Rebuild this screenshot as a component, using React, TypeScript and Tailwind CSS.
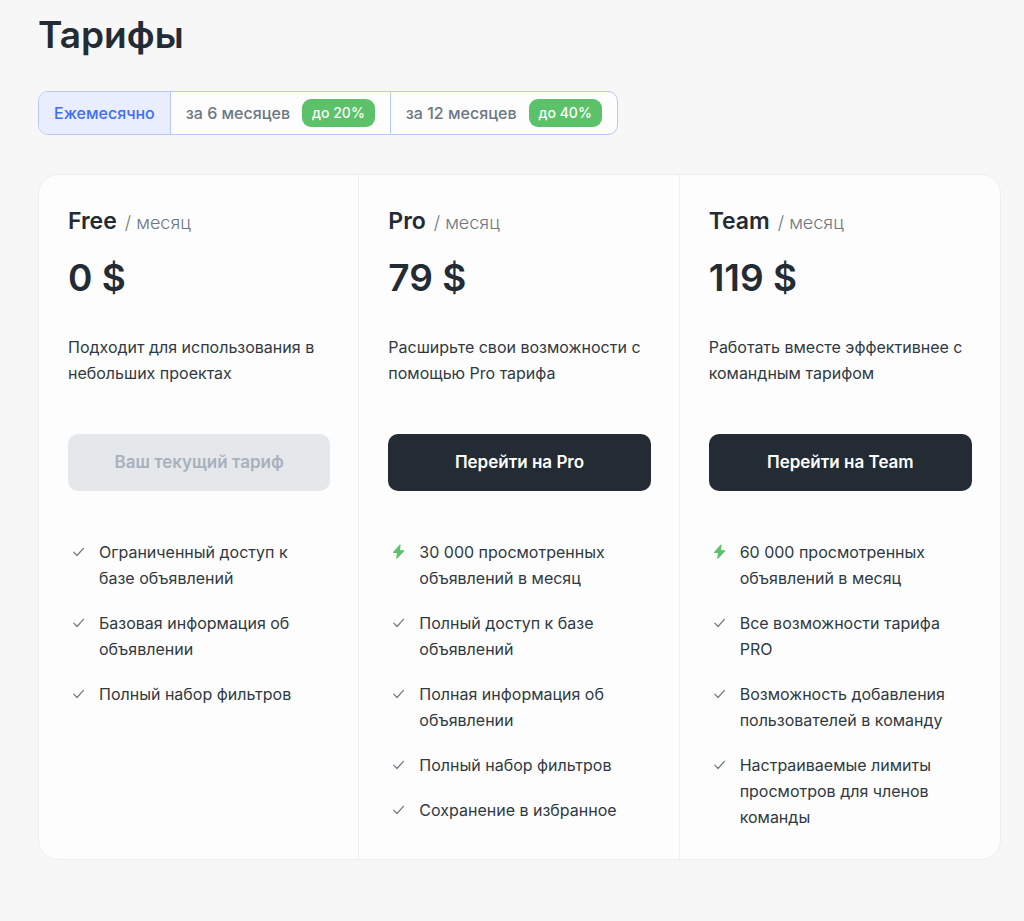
import React, { useState } from 'react';
import clsx from 'clsx';

interface Feature {
  text: string;
  highlight?: boolean;
}

interface Plan {
  name: string;
  price: string;
  description: string;
  action: string;
  current?: boolean;
  features: Feature[];
}

const periods = [
  { id: 'month', label: 'Ежемесячно', discount: '' },
  { id: 'half', label: 'за 6 месяцев', discount: 'до 20%' },
  { id: 'year', label: 'за 12 месяцев', discount: 'до 40%' },
];

const plans: Plan[] = [
  {
    name: 'Free',
    price: '0 $',
    description: 'Подходит для использования в небольших проектах',
    action: 'Ваш текущий тариф',
    current: true,
    features: [
      { text: 'Ограниченный доступ к базе объявлений' },
      { text: 'Базовая информация об объявлении' },
      { text: 'Полный набор фильтров' },
    ],
  },
  {
    name: 'Pro',
    price: '79 $',
    description: 'Расширьте свои возможности с помощью Pro тарифа',
    action: 'Перейти на Pro',
    features: [
      { text: '30 000 просмотренных объявлений в месяц', highlight: true },
      { text: 'Полный доступ к базе объявлений' },
      { text: 'Полная информация об объявлении' },
      { text: 'Полный набор фильтров' },
      { text: 'Сохранение в избранное' },
    ],
  },
  {
    name: 'Team',
    price: '119 $',
    description: 'Работать вместе эффективнее с командным тарифом',
    action: 'Перейти на Team',
    features: [
      { text: '60 000 просмотренных объявлений в месяц', highlight: true },
      { text: 'Все возможности тарифа PRO' },
      { text: 'Возможность добавления пользователей в команду' },
      { text: 'Настраиваемые лимиты просмотров для членов команды' },
    ],
  },
];

const CheckIcon = () => (
  <svg viewBox="0 0 20 26" className="h-[26px] w-5 shrink-0" fill="none" aria-hidden="true">
    <path d="M5.8 13.2l3.2 3.3 6.4-7.2" stroke="#6b7785" strokeWidth="1.2" strokeLinecap="round" strokeLinejoin="round" />
  </svg>
);

const BoltIcon = () => (
  <svg viewBox="0 0 20 26" className="h-[26px] w-5 shrink-0" aria-hidden="true">
    <path
      d="M12 6.2L5.6 13.4h4.1l-.9 5.8L15.6 11.8h-4.3z"
      fill="#5bc26a"
      stroke="#5bc26a"
      strokeWidth="1.2"
      strokeLinejoin="round"
    />
  </svg>
);

const PlanColumn: React.FC<{ plan: Plan }> = ({ plan }) => (
  <section className="pt-[29px] pr-7 pb-[29px] pl-[29px]">
    <h2 className="flex items-baseline gap-2 text-[23px] leading-[34px] font-semibold">
      {plan.name}
      <span className="text-lg leading-[34px] font-light text-[#6b7785]">/ месяц</span>
    </h2>
    <p className="mt-[14px] text-[37px] leading-[48px] font-semibold">{plan.price}</p>
    <p className="mt-8 text-base leading-[26px] text-[#2f3943]">{plan.description}</p>
    <button
      type="button"
      disabled={plan.current}
      className={clsx(
        'mt-12 h-[57px] w-full rounded-[10px] text-[17px] font-semibold',
        plan.current ? 'bg-[#e4e8eb] text-[#a9b1bb]' : 'cursor-pointer bg-[#232b34] text-white'
      )}
    >
      {plan.action}
    </button>
    <ul className="mt-12 flex flex-col gap-[19px]">
      {plan.features.map((feature) => (
        <li key={feature.text} className="flex items-start gap-[11px] pr-4 text-base leading-[26px] text-[#2f3943]">
          {feature.highlight ? <BoltIcon /> : <CheckIcon />}
          <span>{feature.text}</span>
        </li>
      ))}
    </ul>
  </section>
);

export default function App() {
  const [period, setPeriod] = useState('month');

  return (
    <main className="min-h-screen bg-[#f7f7f7] pt-[11px] pr-[23px] pb-12 pl-[38px] font-['Inter','Liberation_Sans',sans-serif] text-[#232b34]">
      <h1 className="text-[37px] leading-[48px] font-semibold">Тарифы</h1>

      <div className="mt-8 flex h-[44px] w-fit divide-x divide-[#b8c8fb] overflow-hidden rounded-[10px] border border-[#b8c8fb] bg-[#fdfdfd]">
        {periods.map((item) => (
          <button
            key={item.id}
            type="button"
            aria-pressed={period === item.id}
            onClick={() => setPeriod(item.id)}
            className={clsx(
              'flex cursor-pointer items-center gap-3 px-[15px] text-base font-medium whitespace-nowrap',
              period === item.id ? 'bg-[#e8eefd] text-[#416df5]' : 'text-[#6b7785]'
            )}
          >
            {item.label}
            {item.discount && (
              <span className="flex h-7 items-center rounded-[9px] bg-[#5bc26a] px-[10px] text-sm text-white">
                {item.discount}
              </span>
            )}
          </button>
        ))}
      </div>

      <div className="mt-[39px] grid grid-cols-3 divide-x divide-[#efefef] rounded-[20px] border border-[#efefef] bg-[#fdfdfd]">
        {plans.map((plan) => (
          <PlanColumn key={plan.name} plan={plan} />
        ))}
      </div>
    </main>
  );
}
